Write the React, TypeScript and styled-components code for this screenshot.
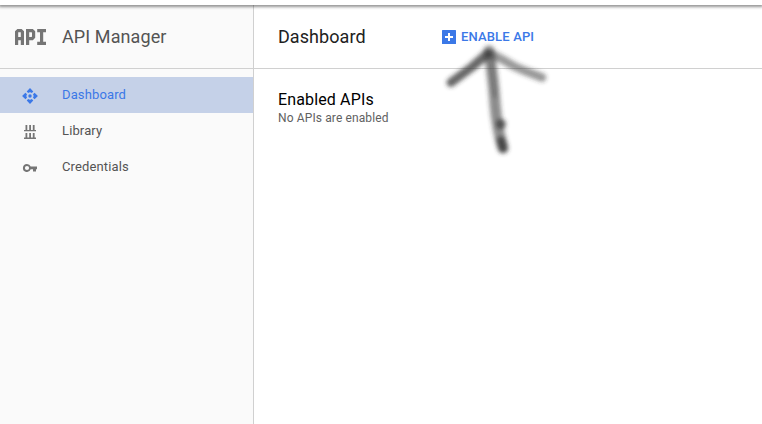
import React from "react";
import styled, { createGlobalStyle } from "styled-components";

const GlobalStyle = createGlobalStyle`
  * { box-sizing: border-box; }
  body {
    margin: 0;
    background: #fff;
    font-family: Roboto, "Liberation Sans", sans-serif;
    overflow: hidden;
  }
`;

const Page = styled.div`
  display: flex;
  flex-direction: column;
  width: 762px;
  height: 424px;
`;

const TopBar = styled.div`
  flex: none;
  height: 5px;
  background: #fff;
  box-shadow: 0 1px 3px 1px rgba(0, 0, 0, 0.42);
  z-index: 1;
`;

const Columns = styled.div`
  display: flex;
  flex: 1;
`;

const Sidebar = styled.aside`
  width: 254px;
  background: #fafafa;
  border-right: 1px solid #d0d0d0;
`;

const Main = styled.main`
  flex: 1;
  position: relative;
`;

const Header = styled.header`
  display: flex;
  align-items: center;
  height: 64px;
  border-bottom: 1px solid #d0d0d0;
`;

const SideHeader = styled(Header)`
  padding-left: 15px;
  gap: 15px;
`;

const MainHeader = styled(Header)`
  padding-left: 24px;
`;

const ProductName = styled.span`
  font-size: 18px;
  line-height: 24px;
  letter-spacing: 0.1px;
  color: #545454;
`;

const PageTitle = styled.h1`
  margin: 0;
  width: 164px;
  font-size: 18px;
  font-weight: 400;
  line-height: 24px;
  letter-spacing: 0.06px;
  color: #212121;
`;

const EnableButton = styled.button`
  display: flex;
  align-items: center;
  gap: 5px;
  padding: 0;
  border: 0;
  background: none;
  font: 500 13px/20px Roboto, sans-serif;
  letter-spacing: 0.15px;
  color: #3b78e7;
`;

const Nav = styled.nav`
  padding-top: 8px;
`;

const NavItem = styled.a<{ $active?: boolean }>`
  display: flex;
  align-items: center;
  height: 36px;
  padding-left: 22px;
  gap: 24px;
  font-size: 13px;
  letter-spacing: 0.13px;
  color: ${(p) => (p.$active ? "#3b78e7" : "#545454")};
  background: ${(p) => (p.$active ? "#c5d1e8" : "transparent")};

  svg {
    flex: none;
    margin-top: 2px;
    color: ${(p) => (p.$active ? "#3b78e7" : "#757575")};
  }
`;

const NavLabel = styled.span`
  line-height: 16px;
`;

const Content = styled.section`
  padding: 21px 24px;
`;

const SectionTitle = styled.h2`
  margin: 0;
  font-size: 16px;
  font-weight: 400;
  line-height: 20px;
  letter-spacing: 0.14px;
  color: #000;
`;

const EmptyNote = styled.p`
  margin: 0;
  font-size: 12px;
  line-height: 16px;
  letter-spacing: 0.12px;
  color: #616161;
`;

const ArrowMark = styled.svg`
  position: absolute;
  left: 176px;
  top: 25px;
  pointer-events: none;
`;

const ApiLogo = () => (
  <svg width="32" height="18" viewBox="0 0 32 18" fill="none" stroke="#757575" strokeWidth="3.2">
    <path d="M1.6 17V3.9L3 2.6H6L7.4 3.9V17M1.6 10.6H7.4" />
    <path d="M12.6 17V2.6H17.2L18.6 4V9.2L17.2 10.6H12.6" />
    <path d="M22.2 2.6H31M26.6 2.6V15.4M22.2 15.4H31" />
  </svg>
);

const DashboardIcon = () => (
  <svg width="16" height="16" viewBox="0 0 16 16" fill="currentColor">
    <path d="M8 .1L11.3 3.4 9.8 5Q8 3.6 6.2 5L4.7 3.4zM8 15.9L4.7 12.6 6.2 11Q8 12.4 9.8 11L11.3 12.6zM.1 8L3.4 4.7 5 6.2Q3.6 8 5 9.8L3.4 11.3zM15.9 8L12.6 11.3 11 9.8Q12.4 8 11 6.2L12.6 4.7z" />
    <circle cx="8" cy="8" r="1.7" />
  </svg>
);

const LibraryIcon = () => (
  <svg width="16" height="16" viewBox="0 0 16 16" fill="currentColor">
    <path d="M3.5 1h1.8v5H3.5zM7.2 1H9v5H7.2zM10.8 1h1.8v5h-1.8zM2 6h12v1.3H2zM3.5 9h1.8v5H3.5zM7.2 9H9v5H7.2zM10.8 9h1.8v5h-1.8zM2 13.6h12V15H2z" />
  </svg>
);

const KeyIcon = () => (
  <svg width="16" height="16" viewBox="0 0 16 16" fill="currentColor">
    <path
      fillRule="evenodd"
      d="M5 4a4 4 0 0 1 3.7 2.6H15v2.7h-1v2.2h-3V9.3H8.7A4 4 0 1 1 5 4zM5 5.9a2.1 2.1 0 1 0 0 4.2 2.1 2.1 0 0 0 0-4.2z"
    />
  </svg>
);

const AddBoxIcon = () => (
  <svg width="14" height="14" viewBox="0 0 14 14">
    <rect width="14" height="14" rx="0.5" fill="#3b78e7" />
    <path d="M7 3v8M3 7h8" stroke="#fff" strokeWidth="2" />
  </svg>
);

const BrushArrow = () => (
  <ArrowMark width="130" height="135" viewBox="430 30 130 135" fill="none" strokeLinecap="round" strokeLinejoin="round">
    <defs>
      <filter id="soft" x="-30%" y="-30%" width="160%" height="160%">
        <feGaussianBlur stdDeviation="2.2" />
      </filter>
    </defs>
    <g filter="url(#soft)" stroke="#333">
      <path d="M451 82.5L472 67L487 54" strokeWidth="9" opacity="0.74" />
      <path d="M492 54L505 61Q514 67 525 71L542 77.5" strokeWidth="8.5" opacity="0.5" />
      <path d="M489 51L491 65Q494 87 495 104Q497 128 503 148" strokeWidth="11" opacity="0.57" />
      <path d="M491 60L495 95" strokeWidth="5" opacity="0.25" />
      <path d="M501 124V124.1" strokeWidth="10" opacity="0.7" />
      <path d="M501 141L503 148" strokeWidth="9" opacity="0.75" />
    </g>
  </ArrowMark>
);

export default function App() {
  return (
    <Page>
      <GlobalStyle />
      <TopBar />
      <Columns>
        <Sidebar>
          <SideHeader>
            <ApiLogo />
            <ProductName>API Manager</ProductName>
          </SideHeader>
          <Nav>
            <NavItem $active>
              <DashboardIcon />
              <NavLabel>Dashboard</NavLabel>
            </NavItem>
            <NavItem>
              <LibraryIcon />
              <NavLabel>Library</NavLabel>
            </NavItem>
            <NavItem>
              <KeyIcon />
              <NavLabel>Credentials</NavLabel>
            </NavItem>
          </Nav>
        </Sidebar>
        <Main>
          <MainHeader>
            <PageTitle>Dashboard</PageTitle>
            <EnableButton>
              <AddBoxIcon />
              ENABLE API
            </EnableButton>
          </MainHeader>
          <Content>
            <SectionTitle>Enabled APIs</SectionTitle>
            <EmptyNote>No APIs are enabled</EmptyNote>
          </Content>
          <BrushArrow />
        </Main>
      </Columns>
    </Page>
  );
}
